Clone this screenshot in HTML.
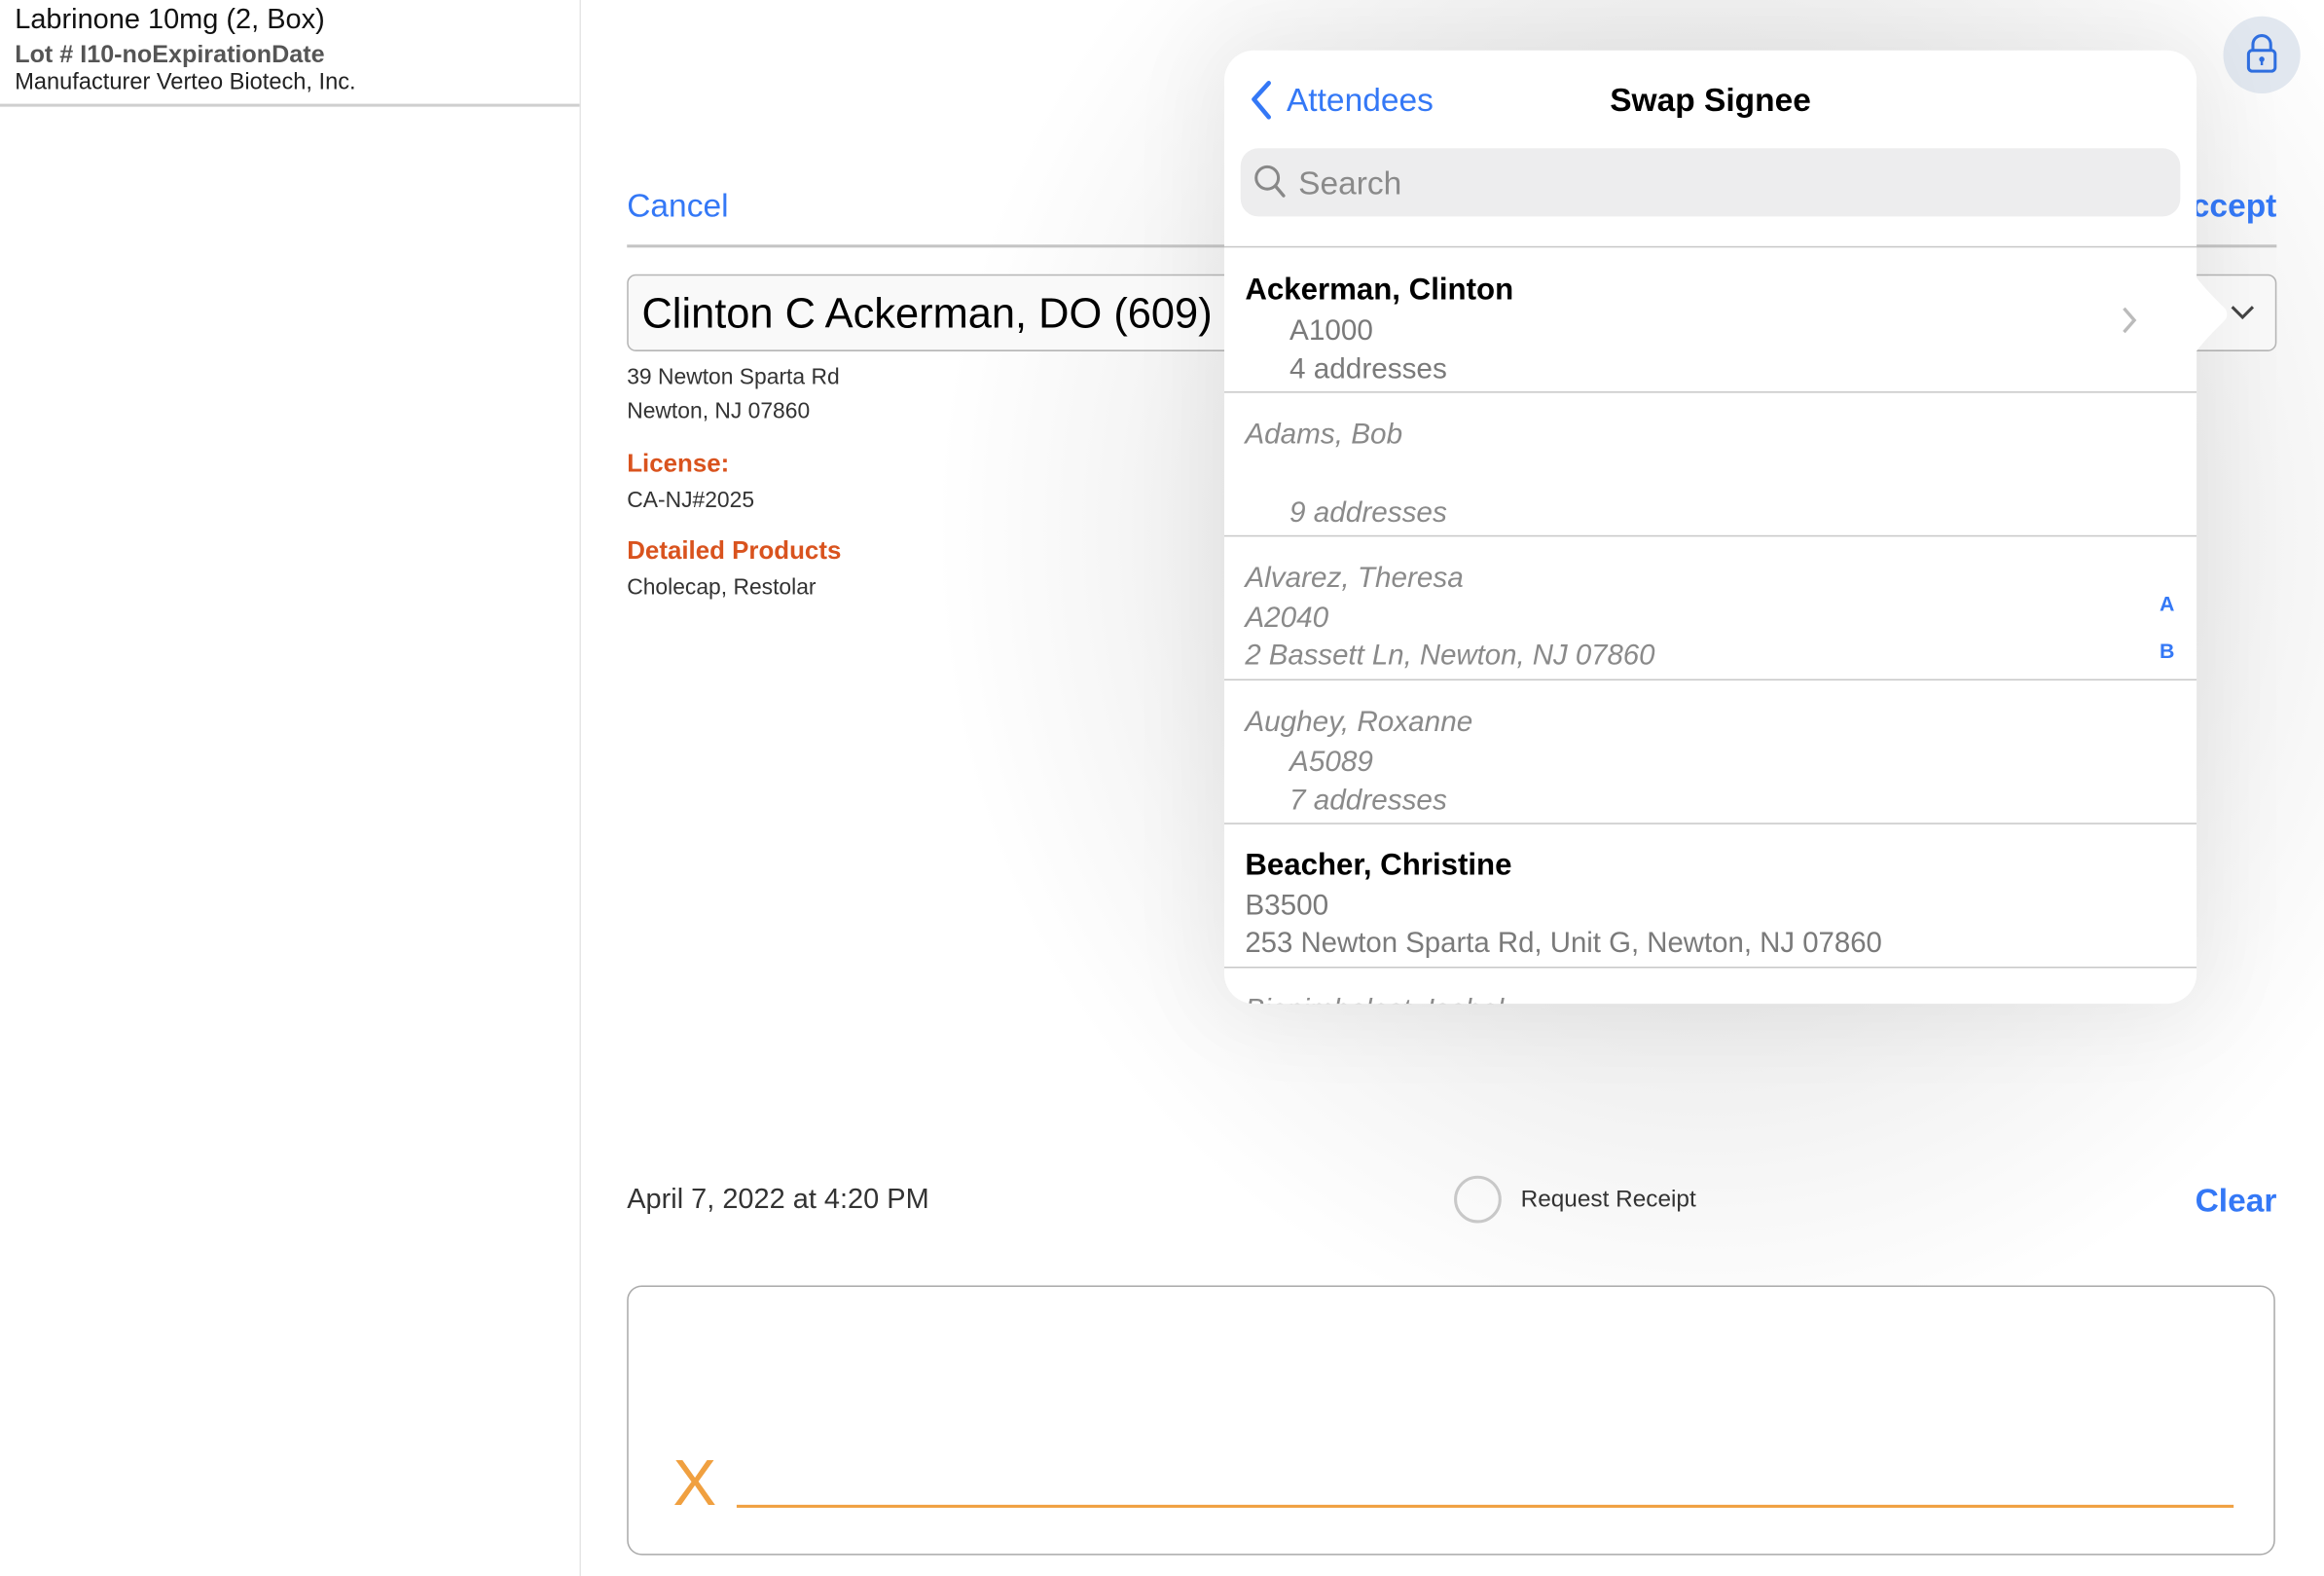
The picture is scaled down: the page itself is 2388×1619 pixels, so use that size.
<!DOCTYPE html>
<html><head><meta charset="utf-8"><style>
html,body{margin:0;padding:0;width:2388px;height:1619px;overflow:hidden;background:#fff;}
#s{position:absolute;left:0;top:0;width:1568px;height:1063px;transform:scale(1.5230);transform-origin:0 0;font-family:"Liberation Sans",sans-serif;}
.t{position:absolute;white-space:nowrap;line-height:30px;height:30px;}
#main{position:absolute;left:392px;top:0;width:1176px;height:1063px;background:radial-gradient(ellipse 520px 560px at 760px 360px,#e2e2e2 0%,#ececec 55%,#f7f7f7 80%,#fff 100%);}
.blue{color:#3478f6}
.row{position:absolute;left:0;width:656px;height:97px;border-bottom:1px solid #c8c8c8;}
.row .t{font-size:19.5px;color:#7a7a7a}
.row .idx{color:#3478f6;font-size:14px;font-weight:bold}
.it{font-style:italic;color:#8a8a8a!important}
</style></head><body><div id="s">
<div class="t" style="left:10px;top:-1px;font-size:19px;color:#111">Labrinone 10mg (2, Box)</div>
<div class="t" style="left:10px;top:22px;font-size:16.5px;color:#555;font-weight:bold;">Lot # I10-noExpirationDate</div>
<div class="t" style="left:10px;top:41px;font-size:15.5px;color:#222">Manufacturer Verteo Biotech, Inc.</div>
<div style="position:absolute;left:0;top:70px;width:391px;height:2px;background:#cfcfcf"></div>
<div style="position:absolute;left:391px;top:0;width:1px;height:1063px;background:#e6e6e6"></div>
<div id="main"></div>
<div class="t blue" style="left:423px;top:124px;font-size:22px">Cancel</div>
<div class="t blue" style="left:1440px;top:124px;font-size:22px;font-weight:bold;width:96px;text-align:right">Accept</div>
<div style="position:absolute;left:423px;top:165px;width:1113px;height:2px;background:#c4c4c4"></div>
<div style="position:absolute;left:423px;top:185px;width:1111px;height:50px;border:1px solid #b5b5b5;border-radius:6px;background:#f9f9f9"></div>
<div class="t" style="left:433px;top:197px;font-size:28.5px;color:#000">Clinton C Ackerman, DO (609)</div>
<svg style="position:absolute;left:1503px;top:204px" width="20" height="14"><path d="M3 3 L10 10 L17 3" stroke="#444" stroke-width="2" fill="none"/></svg>
<div class="t" style="left:423px;top:240px;font-size:15px;color:#333">39 Newton Sparta Rd</div>
<div class="t" style="left:423px;top:263px;font-size:15px;color:#333">Newton, NJ 07860</div>
<div class="t" style="left:423px;top:298px;font-size:17px;color:#d9531e;font-weight:bold">License:</div>
<div class="t" style="left:423px;top:323px;font-size:15px;color:#333">CA-NJ#2025</div>
<div class="t" style="left:423px;top:357px;font-size:17px;color:#d9531e;font-weight:bold">Detailed Products</div>
<div class="t" style="left:423px;top:382px;font-size:15px;color:#333">Cholecap, Restolar</div>
<div class="t" style="left:423px;top:795px;font-size:19px;color:#333">April 7, 2022 at 4:20 PM</div>
<div style="position:absolute;left:981px;top:793px;width:28px;height:28px;border:2px solid #c8c8c8;border-radius:50%"></div>
<div class="t" style="left:1026px;top:795px;font-size:16px;color:#333">Request Receipt</div>
<div class="t blue" style="left:1481px;top:795px;font-size:22px;font-weight:bold">Clear</div>
<div style="position:absolute;left:423px;top:867px;width:1110px;height:180px;border:1.5px solid #aaa;border-radius:10px;background:#fff"></div>
<div style="position:absolute;left:454px;top:976px;font-size:44px;line-height:50px;color:#f0a040">X</div>
<div style="position:absolute;left:497px;top:1015px;width:1010px;height:2px;background:#f0a040"></div>
<div style="position:absolute;left:1500px;top:11px;width:52px;height:52px;border-radius:50%;background:#e1e7ef"></div>
<svg style="position:absolute;left:1512px;top:22px" width="28" height="30" viewBox="0 0 28 30"><path d="M8 12 V8 a6 6 0 0 1 12 0 V12" stroke="#2f6fe0" stroke-width="2" fill="none"/><rect x="5" y="12" width="18" height="14" rx="2.5" stroke="#2f6fe0" stroke-width="2" fill="none"/><circle cx="14" cy="18" r="1.8" fill="#2f6fe0"/><rect x="13.2" y="18" width="1.6" height="4" fill="#2f6fe0"/></svg>
<div style="position:absolute;left:826px;top:34px;width:656px;height:643px;border-radius:20px;background:#fff;box-shadow:0 0 60px 10px rgba(0,0,0,0.06);overflow:hidden">
 <svg style="position:absolute;left:16px;top:20px" width="20" height="28"><path d="M14 2 L4 13 L14 25" stroke="#3478f6" stroke-width="3" fill="none" stroke-linecap="round" stroke-linejoin="round"/></svg>
 <div class="t blue" style="left:42px;top:19px;font-size:22px">Attendees</div>
 <div class="t" style="left:0;width:656px;text-align:center;top:19px;font-size:22px;font-weight:bold;color:#000">Swap Signee</div>
 <div style="position:absolute;left:11px;top:66px;width:634px;height:46px;border-radius:12px;background:#ededee"></div>
 <svg style="position:absolute;left:19px;top:76px" width="24" height="26"><circle cx="10" cy="10" r="7.5" stroke="#888" stroke-width="2" fill="none"/><path d="M15.5 15.5 L21 22" stroke="#888" stroke-width="2.2" stroke-linecap="round"/></svg>
 <div class="t" style="left:50px;top:75px;font-size:22px;color:#8a8a8a">Search</div>
 <div style="position:absolute;left:0;top:132px;width:656px;height:1px;background:#c8c8c8"></div>
 <div class="row" style="top:133px">
  <div class="t" style="left:14px;top:14px;font-weight:bold;color:#000;font-size:20.5px">Ackerman, Clinton</div>
  <div class="t" style="left:44px;top:41px">A1000</div>
  <div class="t" style="left:44px;top:67px">4 addresses</div>
  <svg style="position:absolute;left:604px;top:38px" width="14" height="22"><path d="M3 3 L10 11 L3 19" stroke="#bbb" stroke-width="2.2" fill="none"/></svg>
 </div>
 <div class="row" style="top:230px">
  <div class="t it" style="left:14px;top:14px">Adams, Bob</div>
  <div class="t it" style="left:44px;top:67px">9 addresses</div>
 </div>
 <div class="row" style="top:327px">
  <div class="t it" style="left:14px;top:14px">Alvarez, Theresa</div>
  <div class="t it" style="left:14px;top:41px">A2040</div>
  <div class="t it" style="left:14px;top:67px;font-size:19.3px">2 Bassett Ln, Newton, NJ 07860</div>
  <div class="t idx" style="left:631px;top:31px">A</div>
  <div class="t idx" style="left:631px;top:63px">B</div>
 </div>
 <div class="row" style="top:424px">
  <div class="t it" style="left:14px;top:14px">Aughey, Roxanne</div>
  <div class="t it" style="left:44px;top:41px">A5089</div>
  <div class="t it" style="left:44px;top:67px">7 addresses</div>
 </div>
 <div class="row" style="top:521px">
  <div class="t" style="left:14px;top:14px;font-weight:bold;color:#000;font-size:20.5px">Beacher, Christine</div>
  <div class="t" style="left:14px;top:41px">B3500</div>
  <div class="t" style="left:14px;top:67px;font-size:19.3px">253 Newton Sparta Rd, Unit G, Newton, NJ 07860</div>
 </div>
 <div class="t it" style="left:14px;top:632px;font-size:19.5px">Bianimbalest, Isabel</div>
</div>
<svg style="position:absolute;left:1481px;top:186px" width="24" height="52"><path d="M0 0 C6 8 12 14 20 22 C22 24 22 28 20 30 C12 38 6 44 0 52 Z" fill="#fff"/></svg>
</div></body></html>
